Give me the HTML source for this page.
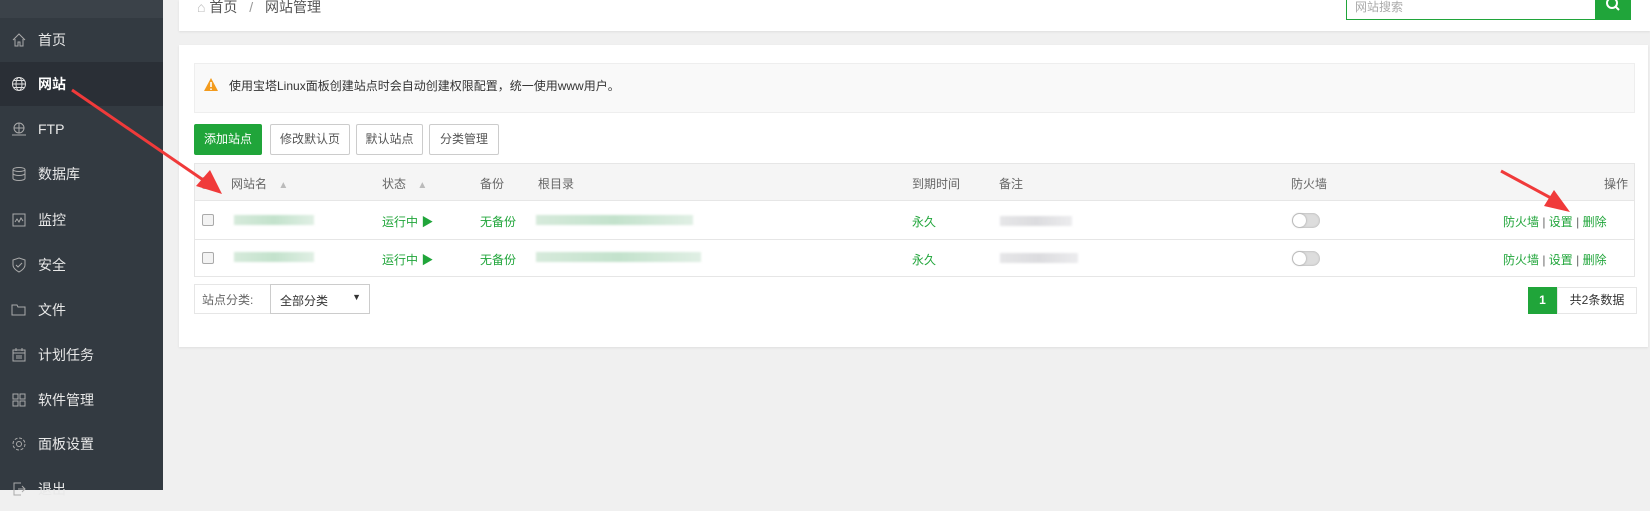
<!DOCTYPE html>
<html><head><meta charset="utf-8"><style>
*{margin:0;padding:0;box-sizing:border-box}
body{width:1650px;height:490px;overflow:hidden;background:#f0f0f0;font-family:"Liberation Sans","Noto Sans CJK SC",sans-serif;font-size:12px;color:#666;position:relative}
.a{position:absolute}
.side{left:0;top:0;width:163px;height:490px;background:#333a41}
.mi{position:absolute;left:0;width:163px;height:44px;color:#e8e8e8;font-size:14px;line-height:44px;padding-left:38px}
.mi svg{position:absolute;left:11px;top:14px}
.btn{position:absolute;top:124px;height:31px;border:1px solid #ccc;border-radius:2px;background:#fff;color:#555;line-height:29px;text-align:center;font-size:12px}
.g{color:#20a53a}
.cb{position:absolute;width:12px;height:12px;border:1px solid #aaa;border-radius:2px;background:#f3f3f3}
.sw{position:absolute;width:28px;height:15px;border-radius:8px;background:#ddd;box-shadow:inset 0 0 2px #aaa}
.sw:after{content:"";position:absolute;left:1px;top:1px;width:13px;height:13px;border-radius:50%;background:#fff;box-shadow:0 0 2px #999}
.blur{position:absolute;height:10px;background:linear-gradient(90deg,#d6eadb,#c3e2cc,#e0efe4);filter:blur(1px)}
.blurg{position:absolute;height:10px;background:linear-gradient(90deg,#e6e6e8,#dcdcdf,#ececee);filter:blur(1px)}
</style></head><body>
<div class="a side"></div>
<div class="a" style="left:0;top:0;width:163px;height:18px;background:#3b4249"></div>
<div class="a" style="left:0;top:62px;width:163px;height:44px;background:#2a2f36"></div>
<div class="mi" style="top:18px"><svg width="16" height="16" viewBox="0 0 16 16" fill="none" stroke="#aaa"><path d="M2 8L8 2l6 6M4 7v7h3v-4h2v4h3V7"/></svg>首页</div>
<div class="mi" style="top:62px;color:#fff;font-weight:bold"><svg width="16" height="16" viewBox="0 0 16 16" fill="none" stroke="#ddd"><circle cx="8" cy="8" r="6.5"/><ellipse cx="8" cy="8" rx="3" ry="6.5"/><path d="M1.5 8h13M3 4.5h10M3 11.5h10"/></svg>网站</div>
<div class="mi" style="top:107px"><svg width="16" height="16" viewBox="0 0 16 16" fill="none" stroke="#aaa"><circle cx="8" cy="7" r="5"/><path d="M3 7h10M8 2v10M1 14h14"/></svg>FTP</div>
<div class="mi" style="top:152px"><svg width="16" height="16" viewBox="0 0 16 16" fill="none" stroke="#aaa"><ellipse cx="8" cy="3.5" rx="6" ry="2"/><path d="M2 3.5v9c0 1 2.7 2 6 2s6-1 6-2v-9M2 7.5c0 1 2.7 2 6 2s6-1 6-2"/></svg>数据库</div>
<div class="mi" style="top:198px"><svg width="16" height="16" viewBox="0 0 16 16" fill="none" stroke="#aaa"><rect x="2" y="2" width="12" height="12"/><path d="M4 10l2-3 2 3 2-4 2 3"/></svg>监控</div>
<div class="mi" style="top:243px"><svg width="16" height="16" viewBox="0 0 16 16" fill="none" stroke="#aaa"><path d="M8 1l6 2v5c0 4-6 7-6 7S2 12 2 8V3z"/><path d="M5 8l2 2 4-4"/></svg>安全</div>
<div class="mi" style="top:288px"><svg width="16" height="16" viewBox="0 0 16 16" fill="none" stroke="#aaa"><path d="M1 3h5l1 2h7v8H1z"/></svg>文件</div>
<div class="mi" style="top:333px"><svg width="16" height="16" viewBox="0 0 16 16" fill="none" stroke="#aaa"><rect x="2" y="3" width="12" height="11"/><path d="M2 6h12M5 1v3M11 1v3M5 9h6M5 11h6"/></svg>计划任务</div>
<div class="mi" style="top:378px"><svg width="16" height="16" viewBox="0 0 16 16" fill="none" stroke="#aaa"><rect x="2" y="2" width="5" height="5"/><rect x="9" y="2" width="5" height="5"/><rect x="2" y="9" width="5" height="5"/><rect x="9" y="9" width="5" height="5"/></svg>软件管理</div>
<div class="mi" style="top:422px"><svg width="16" height="16" viewBox="0 0 16 16" fill="none" stroke="#aaa"><circle cx="8" cy="8" r="2.5"/><circle cx="8" cy="8" r="6" stroke-dasharray="3 1.7"/></svg>面板设置</div>
<div class="mi" style="top:467px"><svg width="16" height="16" viewBox="0 0 16 16" fill="none" stroke="#aaa"><path d="M10 2H3v12h7M7 8h7M11 5l3 3-3 3"/></svg>退出</div>

<div class="a" style="left:179px;top:0;width:1471px;height:31px;background:#fff;box-shadow:0 1px 2px #ddd"></div>
<div class="a" style="left:197px;top:-3px;font-size:14px;color:#555"><span style="color:#bbb">⌂</span> 首页 <span style="color:#999;margin:0 8px">/</span> 网站管理</div>
<div class="a" style="left:1346px;top:-2px;width:250px;height:22px;border:1px solid #20a53a;background:#fff;color:#aaa;padding-left:8px;line-height:16px">网站搜索</div>
<div class="a" style="left:1595px;top:-2px;width:36px;height:22px;background:#20a53a"><svg width="36" height="22" viewBox="0 0 36 22" fill="none" stroke="#fff" stroke-width="2"><circle cx="17" cy="5" r="5"/><path d="M21 9l3 3"/></svg></div>

<div class="a" style="left:179px;top:45px;width:1469px;height:302px;background:#fff;box-shadow:0 1px 2px #ddd"></div>
<div class="a" style="left:194px;top:63px;width:1441px;height:50px;background:#f9f9f9;border:1px solid #eee"></div>
<svg class="a" style="left:204px;top:78px" width="14" height="13" viewBox="0 0 14 13"><path d="M7 0L14 13H0z" fill="#f39b1d"/><path d="M7 4v5M7 10.5v1.5" stroke="#fff" stroke-width="1.6"/></svg>
<div class="a" style="left:229px;top:77px;color:#333;font-size:12px">使用宝塔Linux面板创建站点时会自动创建权限配置，统一使用www用户。</div>

<div class="btn" style="left:194px;width:68px;background:#20a53a;border-color:#20a53a;color:#fff">添加站点</div>
<div class="btn" style="left:270px;width:80px">修改默认页</div>
<div class="btn" style="left:356px;width:67px">默认站点</div>
<div class="btn" style="left:429px;width:70px">分类管理</div>

<div class="a" style="left:194px;top:163px;width:1441px;height:114px;border:1px solid #e6e6e6"></div>
<div class="a" style="left:195px;top:164px;width:1439px;height:37px;background:#f5f5f5;border-bottom:1px solid #e6e6e6"></div>
<div class="a" style="left:195px;top:239px;width:1439px;height:1px;background:#e6e6e6"></div>
<div class="cb" style="left:202px;top:177px"></div>
<div class="a" style="left:231px;top:175px">网站名 <span style="color:#bbb;font-size:10px;margin-left:8px">▲</span></div>
<div class="a" style="left:382px;top:175px">状态 <span style="color:#bbb;font-size:10px;margin-left:8px">▲</span></div>
<div class="a" style="left:480px;top:175px">备份</div>
<div class="a" style="left:538px;top:175px">根目录</div>
<div class="a" style="left:912px;top:175px">到期时间</div>
<div class="a" style="left:999px;top:175px">备注</div>
<div class="a" style="left:1291px;top:175px">防火墙</div>
<div class="a" style="left:1604px;top:175px">操作</div>

<div class="cb" style="left:202px;top:214px"></div>
<div class="cb" style="left:202px;top:252px"></div>
<div class="blur" style="left:234px;top:215px;width:80px"></div>
<div class="blur" style="left:234px;top:252px;width:80px"></div>
<div class="a g" style="left:382px;top:213px">运行中 ▶</div>
<div class="a g" style="left:382px;top:251px">运行中 ▶</div>
<div class="a g" style="left:480px;top:213px">无备份</div>
<div class="a g" style="left:480px;top:251px">无备份</div>
<div class="blur" style="left:536px;top:215px;width:157px"></div>
<div class="blur" style="left:536px;top:252px;width:165px"></div>
<div class="a g" style="left:912px;top:213px">永久</div>
<div class="a g" style="left:912px;top:251px">永久</div>
<div class="blurg" style="left:1000px;top:216px;width:72px"></div>
<div class="blurg" style="left:1000px;top:253px;width:78px"></div>
<div class="sw" style="left:1292px;top:213px"></div>
<div class="sw" style="left:1292px;top:251px"></div>
<div class="a g" style="left:1503px;top:213px">防火墙 <span style="color:#666">|</span> 设置 <span style="color:#666">|</span> 删除</div>
<div class="a g" style="left:1503px;top:251px">防火墙 <span style="color:#666">|</span> 设置 <span style="color:#666">|</span> 删除</div>

<div class="a" style="left:194px;top:284px;width:176px;height:30px;border:1px solid #e6e6e6"></div>
<div class="a" style="left:202px;top:291px">站点分类:</div>
<div class="a" style="left:270px;top:284px;width:100px;height:30px;border:1px solid #ccc;color:#333;padding:7px 0 0 9px">全部分类<span style="position:absolute;right:8px;top:7px;font-size:9px">▼</span></div>

<div class="a" style="left:1528px;top:287px;width:29px;height:27px;background:#20a53a;color:#fff;font-weight:bold;text-align:center;line-height:27px">1</div>
<div class="a" style="left:1557px;top:287px;width:80px;height:27px;border:1px solid #e6e6e6;color:#333;line-height:25px;text-align:center">共2条数据</div>

<svg class="a" style="left:0;top:0" width="1650" height="490">
<path d="M72 90L212 186" stroke="#f03a3a" stroke-width="3"/>
<path d="M222 194L196 186L210 170z" fill="#f03a3a"/>
<path d="M1501 171L1562 204" stroke="#f03a3a" stroke-width="3"/>
<path d="M1570 212L1544 206L1554 190z" fill="#f03a3a"/>
</svg>
</body></html>
